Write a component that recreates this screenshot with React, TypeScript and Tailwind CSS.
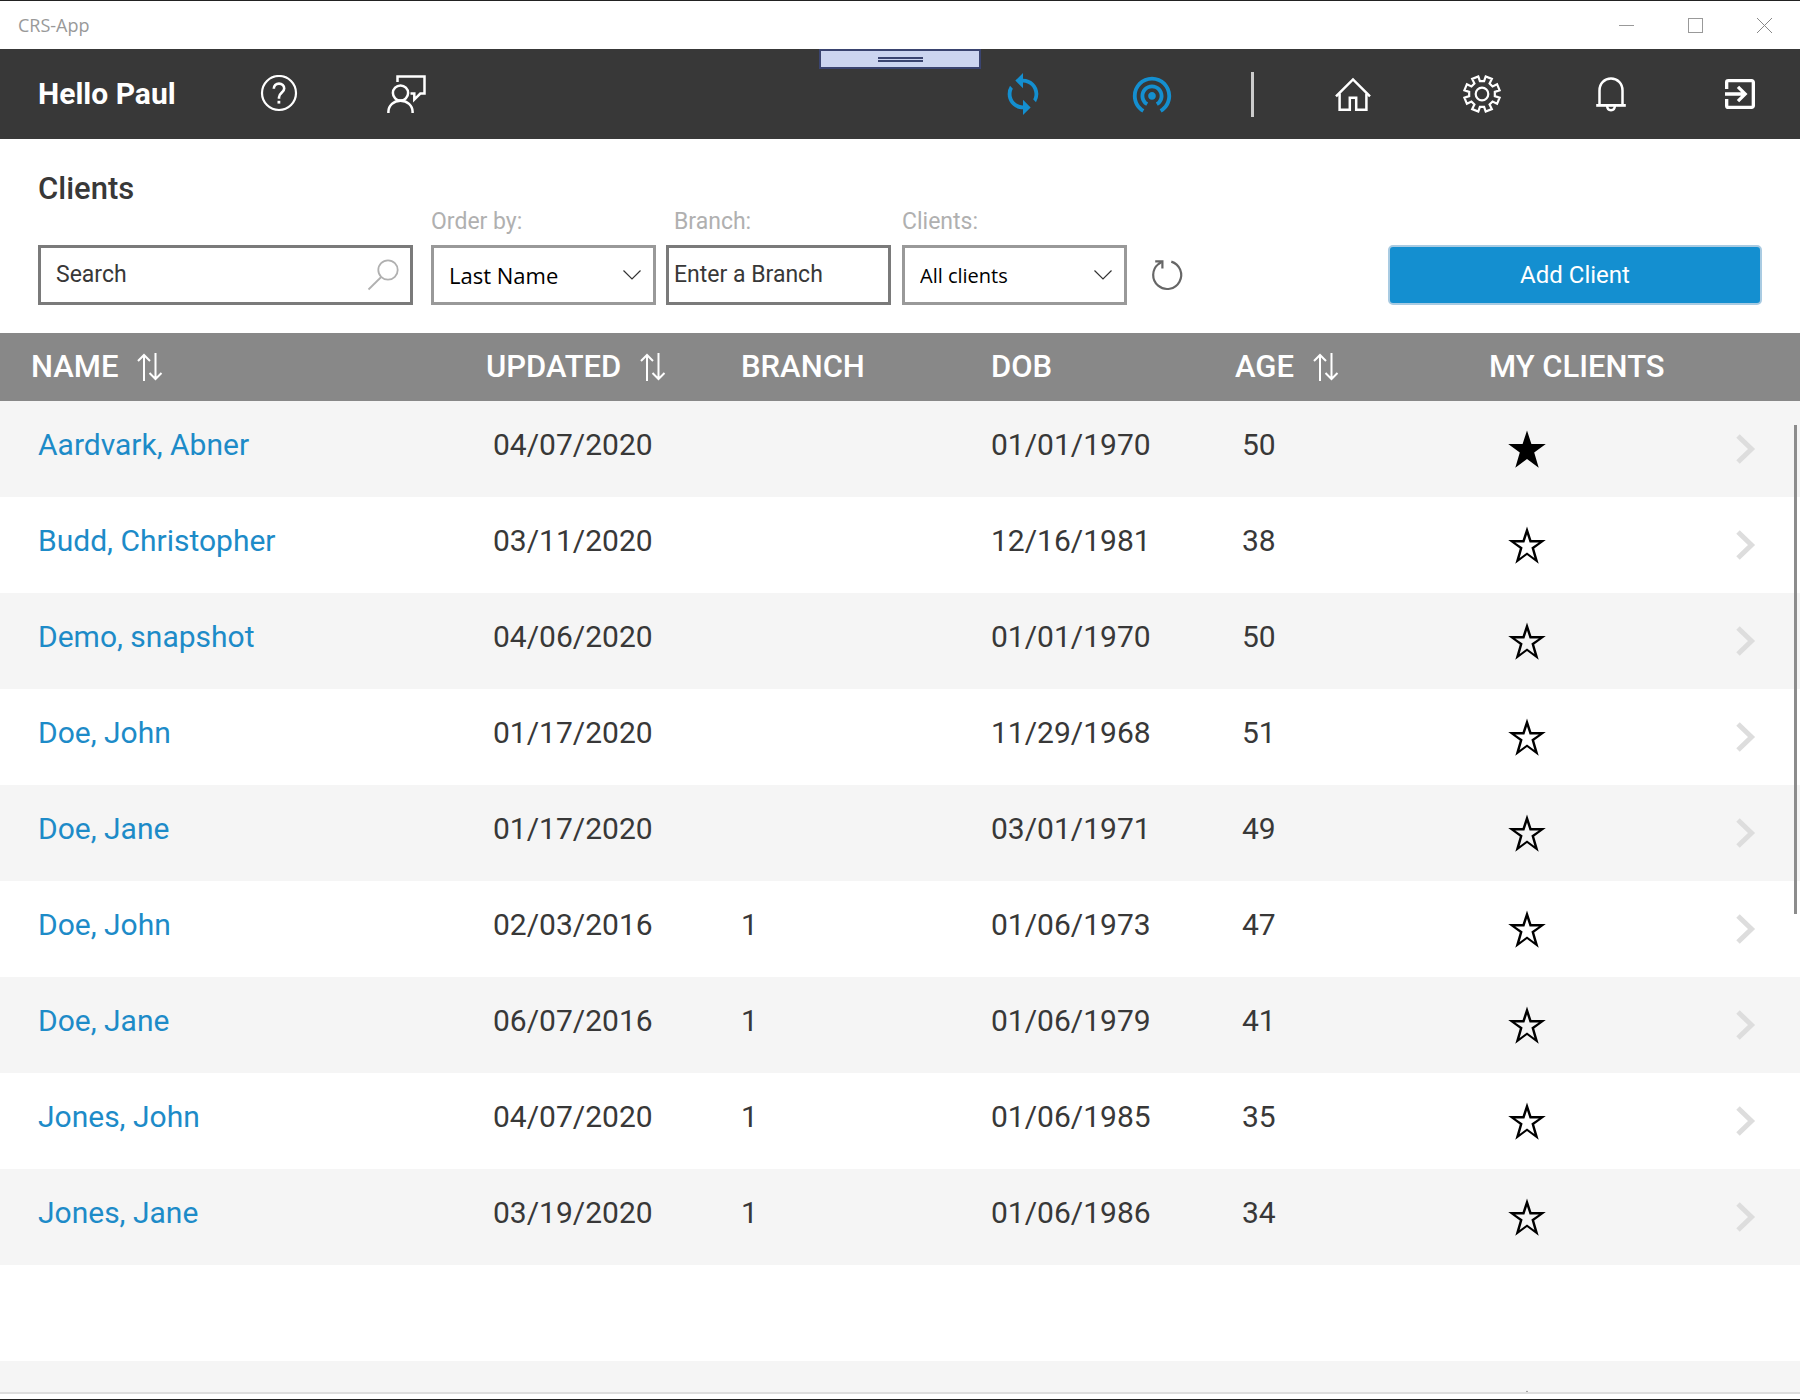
import type { ReactNode } from "react";
import { MdExitToApp, MdSync, MdWifiTethering } from "react-icons/md";

type Client = {
  name: string;
  updated: string;
  branch: string;
  dob: string;
  age: string;
  starred: boolean;
};

const clients: Client[] = [
  { name: "Aardvark, Abner", updated: "04/07/2020", branch: "", dob: "01/01/1970", age: "50", starred: true },
  { name: "Budd, Christopher", updated: "03/11/2020", branch: "", dob: "12/16/1981", age: "38", starred: false },
  { name: "Demo, snapshot", updated: "04/06/2020", branch: "", dob: "01/01/1970", age: "50", starred: false },
  { name: "Doe, John", updated: "01/17/2020", branch: "", dob: "11/29/1968", age: "51", starred: false },
  { name: "Doe, Jane", updated: "01/17/2020", branch: "", dob: "03/01/1971", age: "49", starred: false },
  { name: "Doe, John", updated: "02/03/2016", branch: "1", dob: "01/06/1973", age: "47", starred: false },
  { name: "Doe, Jane", updated: "06/07/2016", branch: "1", dob: "01/06/1979", age: "41", starred: false },
  { name: "Jones, John", updated: "04/07/2020", branch: "1", dob: "01/06/1985", age: "35", starred: false },
  { name: "Jones, Jane", updated: "03/19/2020", branch: "1", dob: "01/06/1986", age: "34", starred: false },
];

function HelpIcon() {
  return (
    <svg width="38" height="38" viewBox="0 0 38 38" fill="none" stroke="currentColor" strokeWidth="2.2">
      <circle cx="19" cy="18" r="17" />
      <path d="M13.8 13.8c0-3.2 2.2-5.200 5.200-5.200s5.200 2 5.200 4.800c0 4.200-5.200 4.600-5.200 8.800v1.600" strokeWidth="2.6" />
      <path d="M17.500 25.800h2.800v2.800h-2.800z" fill="currentColor" stroke="none" />
    </svg>
  );
}

function FeedbackIcon() {
  return (
    <svg width="40" height="40" viewBox="0 0 40 40" fill="none" stroke="currentColor" strokeWidth="2.500">
      <circle cx="14.500" cy="19" r="7.600" />
      <path d="M2.400 39v-1.200c0-6.300 5.400-11 12.100-11s12.100 4.700 12.100 11V39" />
      <path d="M11.500 8V2.400h27v17.200h-4.200l-6 6v-6h-3.800" />
    </svg>
  );
}

function HomeIcon() {
  return (
    <svg width="38" height="38" viewBox="0 0 38 38" fill="none" stroke="currentColor" strokeWidth="2.500">
      <path d="M2 21.400 19 4.400l17 17" />
      <path d="M5.600 18.500v16.300h10.200V22.800h6.400v12h10.200V18.500" />
    </svg>
  );
}

function GearIcon() {
  const teeth = 8;
  const points: string[] = [];
  for (let i = 0; i < teeth; i++) {
    const center = ((i + 0.5) * 2 * Math.PI) / teeth - Math.PI / 2;
    const corners: [number, number][] = [
      [-0.23, 13],
      [-0.185, 18],
      [0.185, 18],
      [0.23, 13],
    ];
    for (const [offset, radius] of corners) {
      const x = 20 + radius * Math.cos(center + offset);
      const y = 20 + radius * Math.sin(center + offset);
      points.push(x.toFixed(2) + "," + y.toFixed(2));
    }
  }
  return (
    <svg width="40" height="40" viewBox="0 0 40 40" fill="none" stroke="currentColor" strokeWidth="2.200">
      <polygon points={points.join(" ")} />
      <circle cx="20" cy="20" r="6.300" />
    </svg>
  );
}

function BellIcon() {
  return (
    <svg width="36" height="38" viewBox="0 0 36 38" fill="none" stroke="currentColor" strokeWidth="2.500">
      <path d="M6.500 30V15.500C6.500 8.500 11.500 3.600 18 3.600s11.500 4.900 11.500 11.900V30" />
      <path d="M3.200 30.400h29.600" strokeWidth="2.800" />
      <path d="M14.200 31c0 2.600 1.600 4.200 3.800 4.200s3.800-1.600 3.800-4.200" />
    </svg>
  );
}

function SortIcon() {
  return (
    <svg width="26" height="28" viewBox="0 0 26 28" fill="none" stroke="currentColor" strokeWidth="2">
      <path d="M7 28V2M1 8l6-6 6 6" />
      <path d="M18.500 0v26M12.500 20l6 6 6-6" />
    </svg>
  );
}

function StarIcon({ filled }: { filled: boolean }) {
  return (
    <svg width="38" height="38" viewBox="0 0 38 38">
      <path
        d="M19 0.500 23.400 14H37.800L26.200 22.500 30.700 37.800 19 28.900 7.300 37.800 11.800 22.500 0.200 14H14.600Z"
        fill="black"
      />
      {!filled && (
        <path
          d="M19 8.600 21.600 16.400H30.800L23.400 21.600 26.400 32.100 19 26.400 11.600 32.100 14.600 21.600 7.200 16.400H16.400Z"
          className="fill-white group-odd:fill-[#f5f5f5]"
        />
      )}
    </svg>
  );
}

function DropChevron() {
  return (
    <svg
      className="pointer-events-none absolute top-1/2 right-[15px] -translate-y-1/2"
      width="18"
      height="10"
      viewBox="0 0 18 10"
      fill="none"
      stroke="#333"
      strokeWidth="1.200"
    >
      <path d="M0.500 0.500 9 9l8.500-8.500" />
    </svg>
  );
}

function BarButton({ label, children }: { label: string; children: ReactNode }) {
  return (
    <button type="button" aria-label={label} className="flex size-12 items-center justify-center">
      {children}
    </button>
  );
}

function SortButton({ children }: { children: ReactNode }) {
  return (
    <button type="button" className="flex items-center gap-[19px]">
      {children}
      <SortIcon />
    </button>
  );
}

function TitleBar() {
  return (
    <div className="flex h-[49px] shrink-0 items-stretch justify-between border-t border-[#222] bg-white pl-[18px] text-[#999]">
      <span className="self-center font-['Open_Sans',sans-serif] text-[18px]">CRS-App</span>
      <div className="flex pr-px">
        <button type="button" aria-label="Minimize" className="flex w-[69px] items-center justify-center">
          <span className="h-px w-[15px] bg-[#999]" />
        </button>
        <button type="button" aria-label="Maximize" className="flex w-[69px] items-center justify-center">
          <span className="size-[15px] border border-[#999]" />
        </button>
        <button type="button" aria-label="Close" className="flex w-[69px] items-center justify-center">
          <svg width="15" height="15" viewBox="0 0 15 15" stroke="#888" strokeWidth="1">
            <path d="M0 0 15 15M15 0 0 15" />
          </svg>
        </button>
      </div>
    </div>
  );
}

function NavBar() {
  return (
    <header className="relative flex h-[90px] shrink-0 items-center justify-between bg-[#383838] pr-9 pl-[38px] text-white">
      <div className="flex items-center gap-[79px]">
        <span className="text-[30px] leading-10 font-bold">Hello Paul</span>
        <BarButton label="Help">
          <HelpIcon />
        </BarButton>
        <BarButton label="Feedback">
          <FeedbackIcon />
        </BarButton>
      </div>
      <div className="absolute top-0 left-1/2 flex h-5 w-[162px] -translate-x-1/2 flex-col items-center justify-center gap-px border-2 border-[#3a4470] bg-[#ccd5f0]">
        <span className="h-[2px] w-[45px] bg-[#3a4470]" />
        <span className="h-[2px] w-[45px] bg-[#3a4470]" />
      </div>
      <div className="flex items-center">
        <div className="flex gap-[81px] text-[#148fd0]">
          <BarButton label="Sync">
            <MdSync size={46} />
          </BarButton>
          <BarButton label="Connection">
            <MdWifiTethering size={46} />
          </BarButton>
        </div>
        <div className="mx-[75px] h-[45px] w-[3px] bg-[#ccc]" />
        <div className="flex gap-[81px]">
          <BarButton label="Home">
            <HomeIcon />
          </BarButton>
          <BarButton label="Settings">
            <GearIcon />
          </BarButton>
          <BarButton label="Notifications">
            <BellIcon />
          </BarButton>
          <BarButton label="Sign out">
            <MdExitToApp size={40} />
          </BarButton>
        </div>
      </div>
    </header>
  );
}

function Filters() {
  return (
    <section className="flex shrink-0 items-end px-[38px] pt-[30px] pb-7 text-[#383838]">
      <div className="mr-[18px] flex w-[375px] flex-col gap-9">
        <h1 className="text-[31px] leading-10 font-medium">Clients</h1>
        <div className="relative">
          <input
            type="text"
            aria-label="Search"
            placeholder="Search"
            className="h-[60px] w-full border-[3px] border-[#7a7a7a] pr-14 pb-0.5 pl-[15px] text-[23px] placeholder:text-[#383838]"
          />
          <svg
            className="pointer-events-none absolute top-3.5 right-3.5"
            width="32"
            height="32"
            viewBox="0 0 32 32"
            fill="none"
            stroke="#b0b0b0"
            strokeWidth="1.800"
          >
            <circle cx="21" cy="11" r="9.700" />
            <path d="M14.200 18 1.500 30.500" />
          </svg>
        </div>
      </div>
      <div className="mr-2.5 flex w-[225px] flex-col gap-[7px]">
        <label htmlFor="order" className="text-[23px] leading-8 text-[#b0b0b0]">
          Order by:
        </label>
        <div className="relative">
          <select
            id="order"
            className="h-[60px] w-full appearance-none border-[3px] border-[#999] bg-white pl-[15px] font-['Open_Sans',sans-serif] text-[22px] text-black"
          >
            <option>Last Name</option>
          </select>
          <DropChevron />
        </div>
      </div>
      <div className="mr-[11px] flex w-[225px] flex-col gap-[7px]">
        <label htmlFor="branch" className="pl-2 text-[23px] leading-8 text-[#b0b0b0]">
          Branch:
        </label>
        <input
          id="branch"
          type="text"
          placeholder="Enter a Branch"
          className="h-[60px] w-full border-[3px] border-[#7a7a7a] pb-0.5 pl-[5px] text-[23px] placeholder:text-[#383838]"
        />
      </div>
      <div className="mr-4 flex w-[225px] flex-col gap-[7px]">
        <label htmlFor="scope" className="text-[23px] leading-8 text-[#b0b0b0]">
          Clients:
        </label>
        <div className="relative">
          <select
            id="scope"
            className="h-[60px] w-full appearance-none border-[3px] border-[#999] bg-white pt-0.5 pl-[15px] font-['Open_Sans',sans-serif] text-[20px] text-black"
          >
            <option>All clients</option>
          </select>
          <DropChevron />
        </div>
      </div>
      <button type="button" aria-label="Refresh" className="mb-1.5 flex size-12 items-center justify-center">
        <svg width="34" height="34" viewBox="0 0 34 34" fill="none" stroke="#666" strokeWidth="2.200">
          <path d="M21.300 3.600A14 14 0 1 1 8.500 6L11.500 4" />
          <path d="M5.200 3.400h7.200V10.600" />
        </svg>
      </button>
      <button
        type="button"
        className="ml-auto h-[60px] w-[374px] rounded-[5px] border-2 border-[#a9cbe2] bg-[#148fd0] text-[24px] text-white"
      >
        Add Client
      </button>
    </section>
  );
}

function ClientTable() {
  return (
    <main className="relative min-h-0 flex-1 overflow-hidden">
      <table className="w-full table-fixed border-collapse text-left text-[30px] leading-10 text-[#383838]">
        <colgroup>
          <col />
          <col className="w-[286px]" />
          <col className="w-[250px]" />
          <col className="w-[213px]" />
          <col className="w-[285px]" />
          <col className="w-[211px]" />
          <col className="w-[100px]" />
        </colgroup>
        <thead>
          <tr className="h-[68px] bg-[#888] text-[31px] text-white">
            <th className="pl-[31px] font-medium">
              <SortButton>NAME</SortButton>
            </th>
            <th className="pl-[31px] font-medium">
              <SortButton>UPDATED</SortButton>
            </th>
            <th className="font-medium">BRANCH</th>
            <th className="font-medium">DOB</th>
            <th className="pl-[31px] font-medium">
              <SortButton>AGE</SortButton>
            </th>
            <th className="font-medium">MY CLIENTS</th>
            <th aria-label="Open" />
          </tr>
        </thead>
        <tbody>
          {clients.map((client, index) => (
            <tr key={index} className="group h-24 bg-white odd:bg-[#f5f5f5]">
              <td className="pb-2 pl-[38px]">
                <a href="#client" className="text-[#1d8bc8]">
                  {client.name}
                </a>
              </td>
              <td className="pb-2 pl-[38px]">{client.updated}</td>
              <td className="pb-2">{client.branch}</td>
              <td className="pb-2">{client.dob}</td>
              <td className="pb-2 pl-[38px]">{client.age}</td>
              <td className="pl-[19px]">
                <button type="button" aria-label="My client" aria-pressed={client.starred} className="block">
                  <StarIcon filled={client.starred} />
                </button>
              </td>
              <td className="pl-9">
                <button type="button" aria-label="Open client" className="block">
                  <svg width="20" height="30" viewBox="0 0 20 30" fill="none" stroke="#ddd" strokeWidth="5">
                    <path d="M2 2 15.500 15 2 28" />
                  </svg>
                </button>
              </td>
            </tr>
          ))}
          <tr className="h-24 bg-white">
            <td colSpan={7} />
          </tr>
          <tr className="group h-24 bg-[#f5f5f5]">
            <td colSpan={5} />
            <td className="pl-[19px]">
              <button type="button" aria-label="My client" className="block">
                <StarIcon filled={false} />
              </button>
            </td>
            <td />
          </tr>
        </tbody>
      </table>
      <div className="absolute top-[92px] right-[3px] h-[489px] w-[3px] bg-[#8c8c8c]" />
    </main>
  );
}

export default function App() {
  return (
    <div className="flex h-screen flex-col overflow-hidden bg-white font-[Roboto,sans-serif]">
      <TitleBar />
      <NavBar />
      <Filters />
      <ClientTable />
      <footer className="h-2 shrink-0 border-t-2 border-b border-t-[#ddd] border-b-[#222] bg-white" />
    </div>
  );
}
